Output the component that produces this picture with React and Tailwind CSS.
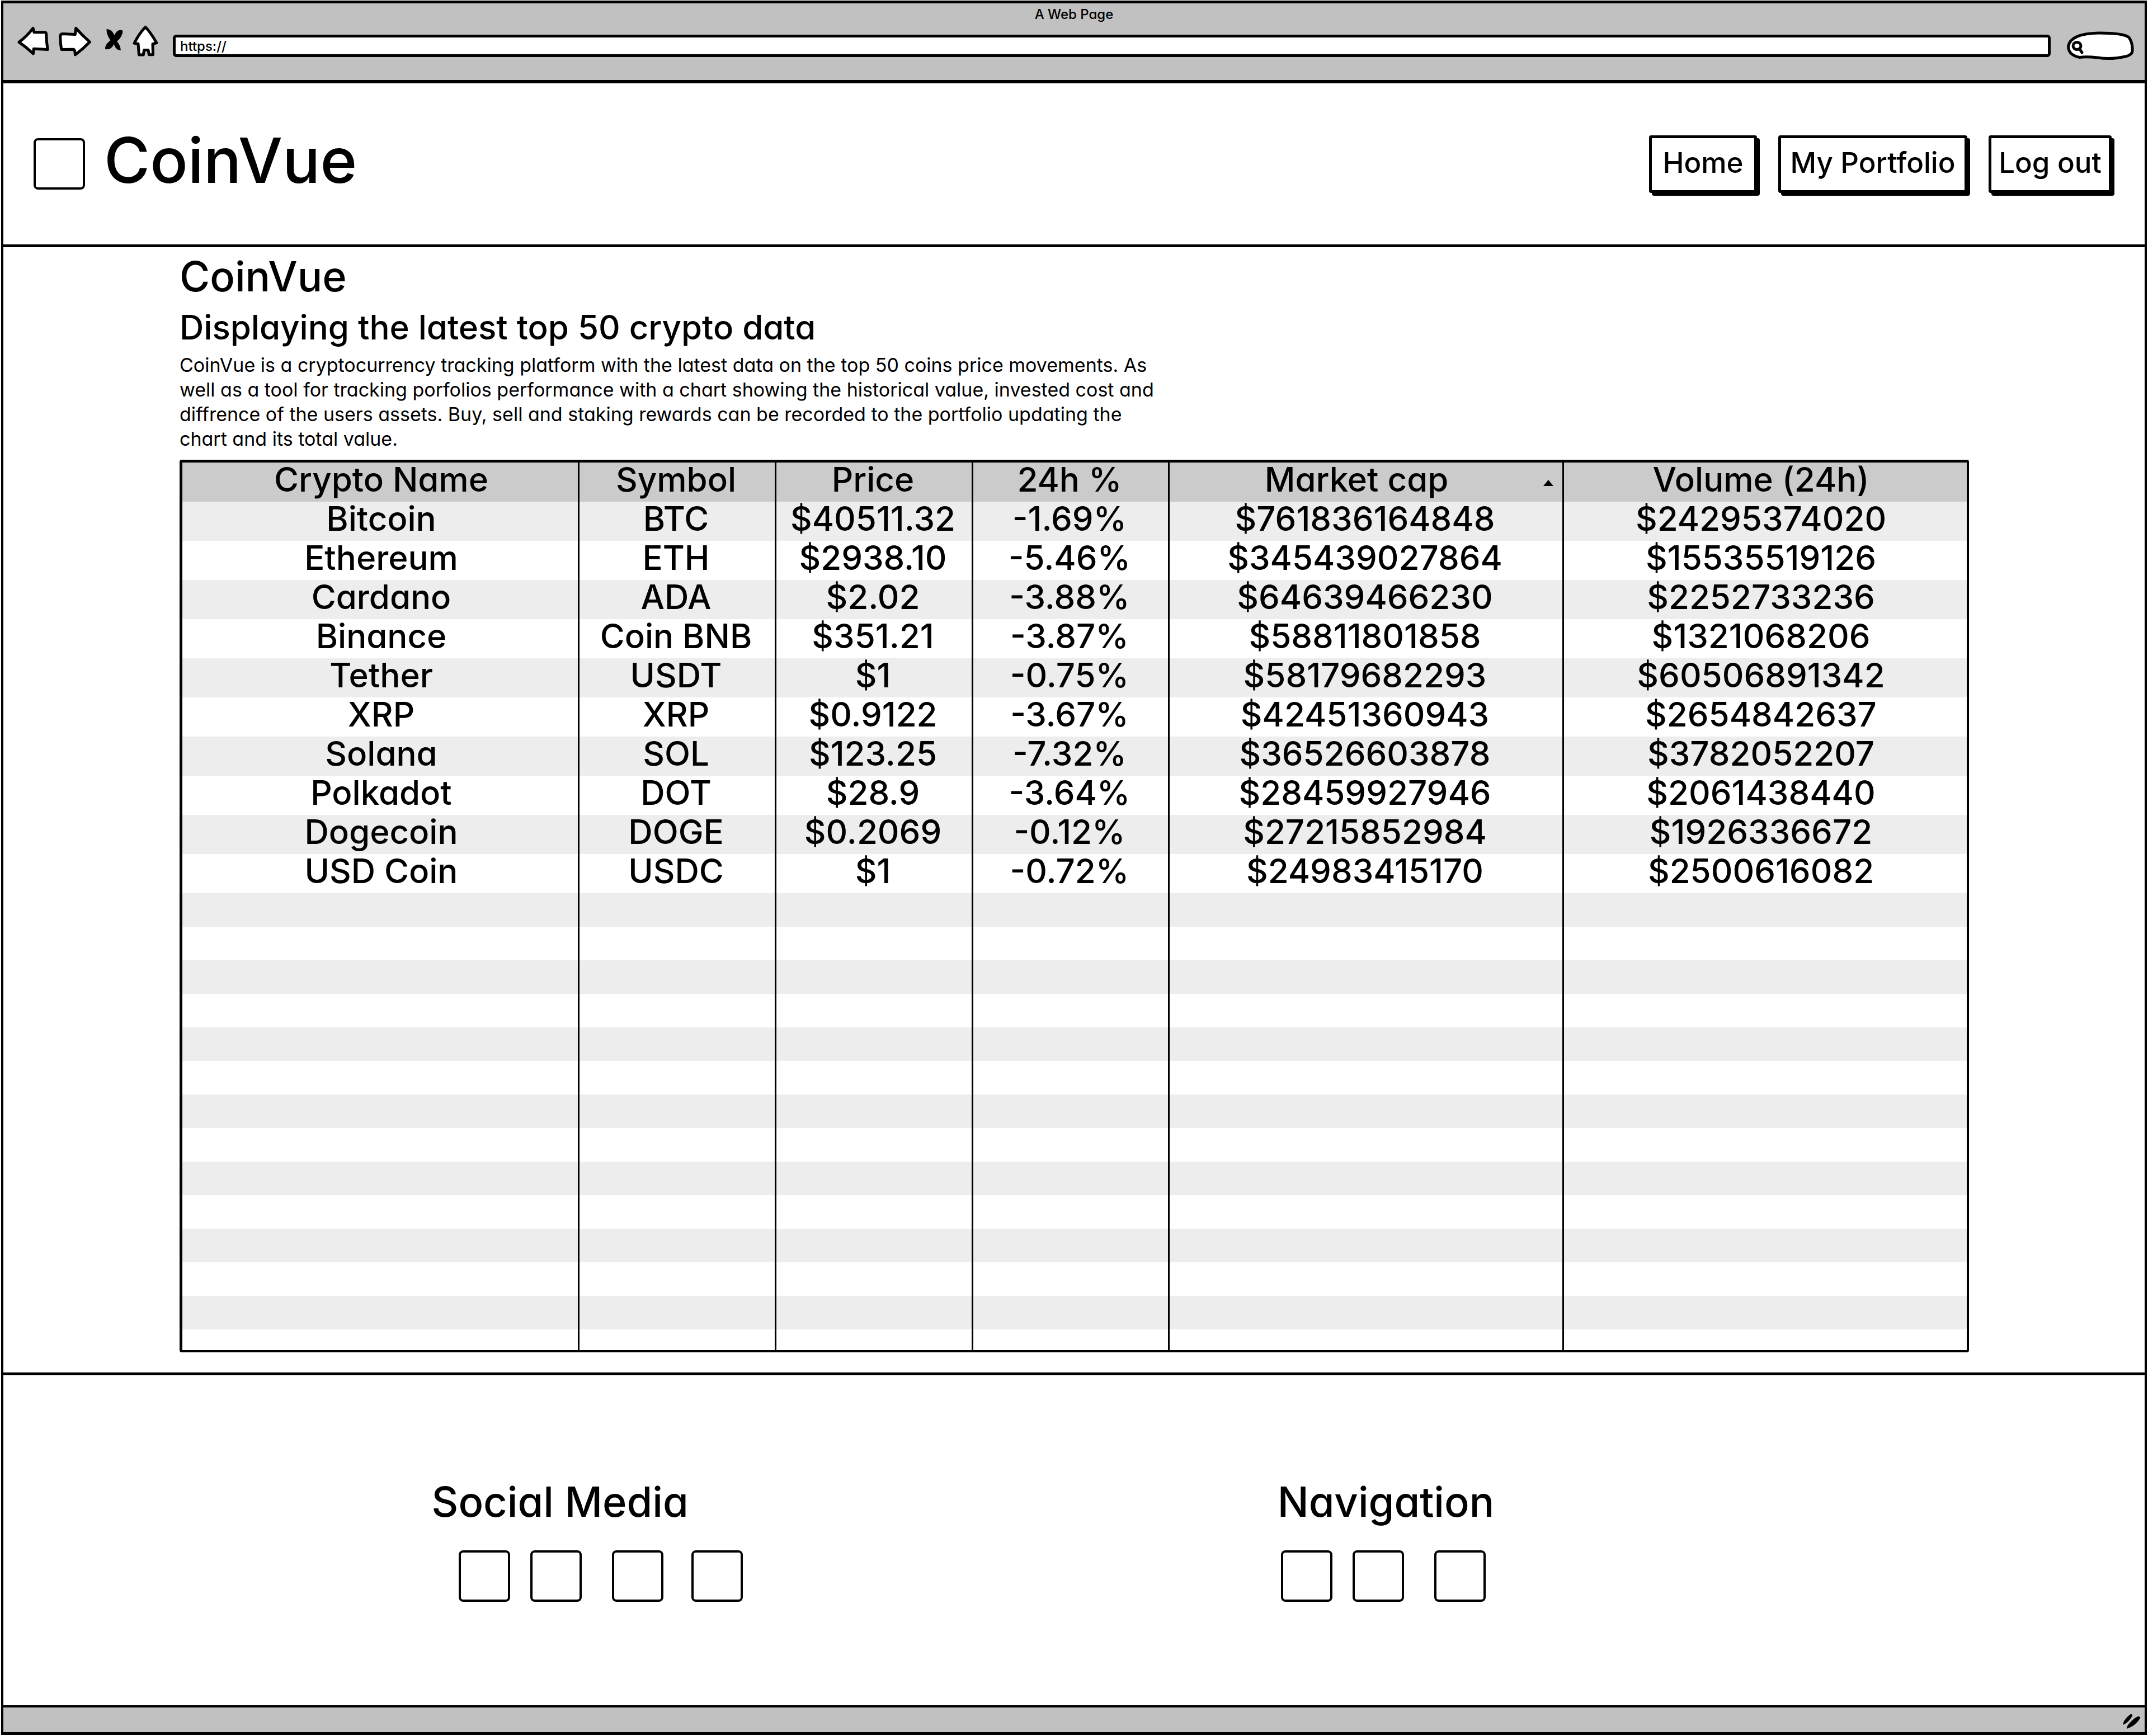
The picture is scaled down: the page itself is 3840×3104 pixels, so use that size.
import React from "react";

const ROWS = [
  ["Bitcoin", "BTC", "$40511.32", "-1.69%", "$761836164848", "$24295374020"],
  ["Ethereum", "ETH", "$2938.10", "-5.46%", "$345439027864", "$15535519126"],
  ["Cardano", "ADA", "$2.02", "-3.88%", "$64639466230", "$2252733236"],
  ["Binance", "Coin BNB", "$351.21", "-3.87%", "$58811801858", "$1321068206"],
  ["Tether", "USDT", "$1", "-0.75%", "$58179682293", "$60506891342"],
  ["XRP", "XRP", "$0.9122", "-3.67%", "$42451360943", "$2654842637"],
  ["Solana", "SOL", "$123.25", "-7.32%", "$36526603878", "$3782052207"],
  ["Polkadot", "DOT", "$28.9", "-3.64%", "$28459927946", "$2061438440"],
  ["Dogecoin", "DOGE", "$0.2069", "-0.12%", "$27215852984", "$1926336672"],
  ["USD Coin", "USDC", "$1", "-0.72%", "$24983415170", "$2500616082"],
];
const BLANK_ROWS = Array.from({ length: 14 }, (_, i) => i);
const COLUMNS = [0, 1, 2, 3, 4, 5];

const CELL = "border-r-[3px] border-black py-0 pr-1 pl-0 first:pr-0 first:pl-1 last:border-r-0 last:pr-4";
const SQUARE = "block size-[92px] shrink-0 rounded-lg border-4 border-black bg-white";

function BrowserChrome() {
  return (
    <div className="h-[143px] border-b-[6px] border-black bg-[#c1c1c1]">
      <p className="h-[38px] text-center text-[24px] leading-[40px]">A Web Page</p>
      <div className="flex items-start pr-[18px] pl-[22px]">
        <button type="button" aria-label="Back">
          <svg className="block h-[60px] w-[64px]" viewBox="28 44 64 60" fill="#fff" stroke="#000" strokeWidth="5" strokeLinejoin="round">
            <path d="M34 75.3 Q48 65 59 50.5 Q60 54 61 57.8 L80 57.8 Q82.5 58 82.7 61 Q83 76 85.3 88.5 L60.3 87.3 L59.4 96 Q47 84 34 75.3Z" />
          </svg>
        </button>
        <button type="button" aria-label="Forward" className="ml-2.5">
          <svg className="block h-[60px] w-[64px]" viewBox="102 44 64 60" fill="#fff" stroke="#000" strokeWidth="5" strokeLinejoin="round">
            <path d="M160.5 75 Q147 63 135.7 50.5 L134.4 61.5 L112 60.5 Q107.5 60.5 107.8 66 Q108 79 110 88.5 L132 88.3 Q134 89 134.4 98 Q148 88 160.5 75Z" />
          </svg>
        </button>
        <button type="button" aria-label="Stop" className="ml-5">
          <svg className="block h-[60px] w-[36px]" viewBox="186 44 36 60">
            <path d="M190.500 52 Q200 52 204.500 63 Q208 55 213 54 Q217 53 219.500 55 Q219 66 209 74 Q215 80 216 90 Q208 91 203.500 79 Q199 90 188 88 Q187 80 197.500 72 Q190 62 190.500 52Z" />
          </svg>
        </button>
        <button type="button" aria-label="Home page" className="ml-3.5">
          <svg className="block h-[60px] w-[48px]" viewBox="236 44 48 60" fill="#fff" stroke="#000" strokeWidth="5" strokeLinejoin="round">
            <path d="M260 48.500 Q268 56 280 76.700 L273 78.700 L273.500 97.700 L266.500 97.700 L265 89.500 L257.600 89.500 L256.300 98 L248.500 98 L247 78.300 L240 77.300 Q250 58 260 48.500Z" />
          </svg>
        </button>
        <input
          aria-label="Address"
          defaultValue="https://"
          className="mt-[18px] ml-[25px] h-10 min-w-0 flex-1 rounded-md border-[5px] border-black bg-white pl-2 text-[24px] leading-[30px] outline-none"
        />
        <label className="relative mt-3 ml-7 block h-[52px] w-[122px]">
          <svg className="block h-[52px] w-[122px]" viewBox="3694 56 122 52" fill="#fff" stroke="#000" strokeWidth="5" strokeLinejoin="round">
            <path d="M3697.500 83 Q3701 60 3752 59 Q3797 59 3806 67 Q3813 77 3812 91 Q3812 98 3800 101 Q3773 107 3750 103 Q3730 101 3718 102.500 Q3698 99 3697.500 83Z" />
            <ellipse cx="3713" cy="82" rx="7" ry="6.500" fill="none" />
            <path d="M3718 88 L3722 94" strokeLinecap="round" />
          </svg>
          <input type="search" aria-label="Search" className="absolute inset-y-2 right-3 left-8 bg-transparent text-[24px] outline-none" />
        </label>
      </div>
    </div>
  );
}

function NavButton({ width, children }) {
  return (
    <button
      type="button"
      className={`${width} h-[103px] rounded-sm border-[5px] border-black bg-white pb-1 text-center text-[51px] leading-[80px] whitespace-nowrap shadow-[5px_5px_0_0_#000]`}
    >
      {children}
    </button>
  );
}

function SiteHeader() {
  return (
    <header className="flex h-[293px] items-center border-b-[5px] border-black pr-[59px] pl-[54px]">
      <div className={SQUARE} />
      <p className="ml-[34px] pb-3.5 text-[112px] leading-[120px]">CoinVue</p>
      <nav className="ml-auto flex gap-[38px]">
        <NavButton width="w-[193px]">Home</NavButton>
        <NavButton width="w-[338px]">My Portfolio</NavButton>
        <NavButton width="w-[220px]">Log out</NavButton>
      </nav>
    </header>
  );
}

function CryptoTable() {
  return (
    <table className="mt-[15px] w-full table-fixed border-separate border-spacing-0 rounded-sm border-4 border-t-[5px] border-l-[5px] border-black text-center text-[60px] leading-[60px]">
      <colgroup>
        <col className="w-[710px]" />
        <col className="w-[352px]" />
        <col className="w-[352px]" />
        <col className="w-[351px]" />
        <col className="w-[705px]" />
        <col className="w-[720px]" />
      </colgroup>
      <thead>
        <tr className="h-[70px] bg-[#cbcbcb] align-top">
          <th scope="col" className={`${CELL} font-[450]`}>Crypto Name</th>
          <th scope="col" className={`${CELL} font-[450]`}>Symbol</th>
          <th scope="col" className={`${CELL} font-[450]`}>Price</th>
          <th scope="col" className={`${CELL} font-[450]`}>24h %</th>
          <th scope="col" aria-sort="ascending" className={`${CELL} font-[450]`}>
            <button type="button" className="flex w-full items-center pr-3">
              <span className="flex-1">Market cap</span>
              <svg className="mt-3 h-[11px] w-[18px]" viewBox="0 0 18 11">
                <path d="M9 0 L18 11 H0Z" />
              </svg>
            </button>
          </th>
          <th scope="col" className={`${CELL} font-[450]`}>Volume (24h)</th>
        </tr>
      </thead>
      <tbody>
        {ROWS.map((row) => (
          <tr key={row[0]} className="h-[70px] align-top odd:bg-[#ededed]">
            {row.map((value, i) => (
              <td key={i} className={CELL}>{value}</td>
            ))}
          </tr>
        ))}
        {BLANK_ROWS.map((n) => (
          <tr key={n} className="h-[60px] odd:bg-[#ededed] last:h-[37px]">
            {COLUMNS.map((c) => (
              <td key={c} className={CELL} />
            ))}
          </tr>
        ))}
      </tbody>
    </table>
  );
}

function SiteFooter() {
  return (
    <footer className="grid grow grid-cols-2 content-start border-t-[5px] border-black pt-[181px] pr-[1%] pb-[183px] pl-[20%]">
      <section>
        <h2 className="text-[74px] leading-[90px]">Social Media</h2>
        <div className="mt-[42px] ml-12 flex">
          <a href="#facebook" aria-label="Facebook" className={SQUARE} />
          <a href="#twitter" aria-label="Twitter" className={`${SQUARE} ml-9`} />
          <a href="#instagram" aria-label="Instagram" className={`${SQUARE} ml-[54px]`} />
          <a href="#youtube" aria-label="YouTube" className={`${SQUARE} ml-[50px]`} />
        </div>
      </section>
      <section>
        <h2 className="text-[74px] leading-[90px]">Navigation</h2>
        <div className="mt-[42px] ml-1.5 flex">
          <a href="#home" aria-label="Home" className={SQUARE} />
          <a href="#portfolio" aria-label="My Portfolio" className={`${SQUARE} ml-9`} />
          <a href="#logout" aria-label="Log out" className={`${SQUARE} ml-[54px]`} />
        </div>
      </section>
    </footer>
  );
}

export default function App() {
  return (
    <div className="flex min-h-screen flex-col bg-white px-0.5 pt-px pb-0.5 font-['Inter',sans-serif] font-[450] text-black [font-feature-settings:'cv11']">
      <div className="flex grow flex-col border-4 border-y-[5px] border-black">
        <BrowserChrome />
        <SiteHeader />
        <main className="mx-[315px] pt-[7px] pb-9">
          <h1 className="text-[74px] leading-[90px]">CoinVue</h1>
          <h2 className="mt-1.5 text-[60px] leading-[80px]">Displaying the latest top 50 crypto data</h2>
          <p className="mt-1.5 max-w-[1770px] text-[34px] leading-[44px] font-normal">
            CoinVue is a cryptocurrency tracking platform with the latest data on the top 50 coins price movements. As
            well as a tool for tracking porfolios performance with a chart showing the historical value, invested cost and
            diffrence of the users assets. Buy, sell and staking rewards can be recorded to the portfolio updating the
            chart and its total value.
          </p>
          <CryptoTable />
        </main>
        <SiteFooter />
        <div className="flex h-12 items-start justify-end border-t-4 border-black bg-[#c1c1c1] pr-1">
          <svg className="mt-2.5 h-[32px] w-[36px]" viewBox="0 0 36 32">
            <path d="M2 21 Q1 17 4 13 Q10 5 15 2 Q19 2 18 5 Q12 16 2 21Z" />
            <path d="M8 28 Q8 23 13 18 Q22 8 28 6 Q33 6 32 9 Q24 23 8 28Z" />
          </svg>
        </div>
      </div>
    </div>
  );
}
